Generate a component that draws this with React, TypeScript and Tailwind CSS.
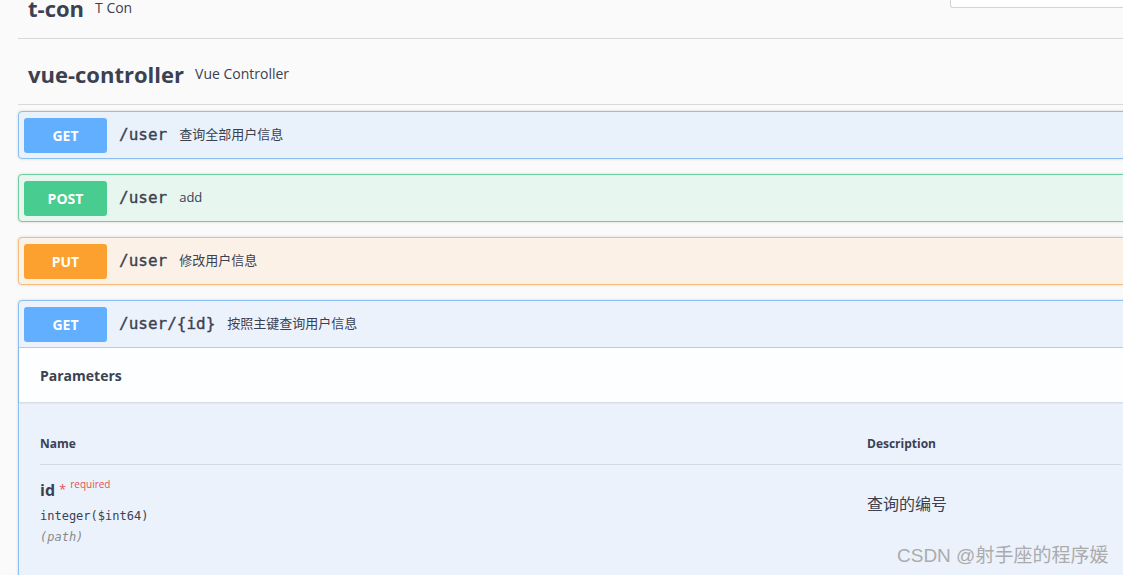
import React from "react";

function TagHeader({ name, desc }: { name: string; desc: string }) {
  return (
    <div className="h-[66px] border-b border-[#d9d9d9] flex items-center pl-[10px] pt-[4px]">
      <span className="text-[22px] font-bold leading-none text-[#3b4151]">{name}</span>
      <span className="ml-[11px] text-[14px] leading-none text-[#3b4151]">{desc}</span>
    </div>
  );
}

type Kind = "get" | "post" | "put";

const styles: Record<Kind, { box: string; badge: string; label: string }> = {
  get: { box: "border-[#8cbfef] bg-[#e9f2fb]", badge: "bg-[#61affe]", label: "GET" },
  post: { box: "border-[#6fcd9f] bg-[#e7f6ee]", badge: "bg-[#49cc90]", label: "POST" },
  put: { box: "border-[#f5bd7a] bg-[#fcf1e6]", badge: "bg-[#fca130]", label: "PUT" },
};

function Summary({ kind, path, desc }: { kind: Kind; path: string; desc: string }) {
  const s = styles[kind];
  return (
    <div className="flex items-center px-[5px] h-[46px]">
      <div
        className={`${s.badge} w-[83px] h-[35px] rounded-[3px] flex items-center justify-center text-white text-[14px] font-bold`}
      >
        {s.label}
      </div>
      <span className="ml-[12px] font-['DejaVu_Sans_Mono',monospace] text-[16px] text-[#3b4151] font-normal [-webkit-text-stroke:0.35px_#3b4151]">
        {path}
      </span>
      <span className="ml-[12px] text-[13px] text-[#3b4151] font-['Open_Sans','Noto_Sans_CJK_SC',sans-serif]">
        {desc}
      </span>
    </div>
  );
}

function Block({ kind, path, desc }: { kind: Kind; path: string; desc: string }) {
  const s = styles[kind];
  return (
    <div className={`border rounded-[4px] shadow-[0_0_3px_rgba(0,0,0,0.15)] ${s.box}`}>
      <Summary kind={kind} path={path} desc={desc} />
    </div>
  );
}

export default function App() {
  return (
    <div className="relative w-[1123px] h-[575px] overflow-hidden bg-[#fafafa] text-[#3b4151] font-['Open_Sans','Noto_Sans_CJK_SC',sans-serif]">
      <div className="absolute top-0 left-[950px] w-[220px] h-[8px] bg-white border-l border-b border-[#d4d4d4] rounded-bl-[3px]" />
      <div className="ml-[18px] w-[1125px] -mt-[27px]">
        <TagHeader name="t-con" desc="T Con" />
        <TagHeader name="vue-controller" desc="Vue Controller" />
        <div className="mt-[6px] flex flex-col gap-[15px]">
          <Block kind="get" path="/user" desc="查询全部用户信息" />
          <Block kind="post" path="/user" desc="add" />
          <Block kind="put" path="/user" desc="修改用户信息" />
          <div className="border border-[#8cbfef] rounded-[4px] shadow-[0_0_3px_rgba(0,0,0,0.15)] bg-[#ebf2fc] pb-[80px]">
            <div className="border-b border-[#c3cbd6]">
              <Summary kind="get" path="/user/{id}" desc="按照主键查询用户信息" />
            </div>
            <div className="h-[54px] bg-[#fcfeff] shadow-[0_1px_2px_rgba(0,0,0,0.12)] flex items-center pl-[21px]">
              <span className="text-[14px] font-bold">Parameters</span>
            </div>
            <div className="px-[21px] pt-[21px]">
              <div className="flex border-b border-[#d3d9e2] h-[42px] items-center text-[12px] font-bold">
                <div className="w-[827px]">Name</div>
                <div>Description</div>
              </div>
              <div className="flex pt-[10px]">
                <div className="w-[827px]">
                  <div className="flex items-start h-[26px]">
                    <span className="text-[16px] font-bold leading-none mt-[7px]">id</span>
                    <span className="text-[#e05555] text-[13px] leading-none ml-[4px] mt-[8px]">*</span>
                    <span className="text-[#e05555] text-[10px] leading-none ml-[4px] mt-[4px]">required</span>
                  </div>
                  <div className="mt-[9px] font-['DejaVu_Sans_Mono',monospace] text-[12px] leading-none text-[#3b4151]">
                    integer($int64)
                  </div>
                  <div className="mt-[9px] font-['DejaVu_Sans_Mono',monospace] text-[12px] leading-none italic text-[#8a8a8a]">
                    (path)
                  </div>
                </div>
                <div className="pt-[20px] text-[16px] leading-none font-['Noto_Sans_CJK_SC',sans-serif]">
                  查询的编号
                </div>
              </div>
            </div>
          </div>
        </div>
      </div>
      <div className="absolute left-[897px] top-[546px] text-[19px] leading-none text-[#ababab] font-['Liberation_Sans','Noto_Sans_CJK_SC',sans-serif]">
        CSDN @射手座的程序媛
      </div>
    </div>
  );
}
